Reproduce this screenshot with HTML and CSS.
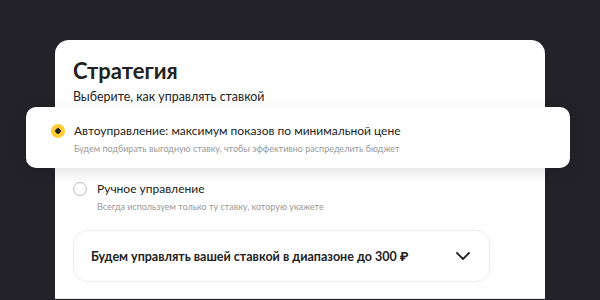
FILE: index.html
```html
<!DOCTYPE html>
<html lang="ru">
<head>
<meta charset="UTF-8">
<meta name="viewport" content="width=device-width, initial-scale=1.0">
<title>Стратегия</title>
<link rel="stylesheet" href="styles.css">
</head>
<body>

  <div class="card">
    <h1 class="card-title">Стратегия</h1>
    <p class="card-subtitle">Выберите, как управлять ставкой</p>

    <div class="option option-active">
      <span class="radio radio-checked"></span>
      <div class="option-text">
        <div class="option-label">Автоуправление: максимум показов по минимальной цене</div>
        <div class="option-hint">Будем подбирать выгодную ставку, чтобы эффективно распределить бюджет</div>
      </div>
    </div>

    <div class="option">
      <span class="radio"></span>
      <div class="option-text">
        <div class="option-label">Ручное управление</div>
        <div class="option-hint">Всегда используем только ту ставку, которую укажете</div>
      </div>
    </div>

    <div class="range">
      <span class="range-text">Будем управлять вашей ставкой в диапазоне до 300 ₽</span>
      <svg class="chevron" width="16" height="16" viewBox="0 0 16 16">
        <path d="M2 5l6 6 6-6" fill="none" stroke="#222" stroke-width="1.8" stroke-linecap="round" stroke-linejoin="round"/>
      </svg>
    </div>
  </div>

</body>
</html>
```

FILE: styles.css
```css
body {
  margin: 0;
  padding: 40px 0 0;
  background-color: #232228;
  font-family: 'Lato', 'Roboto', sans-serif;
  color: #222;
  height: 300px;
  box-sizing: border-box;
  overflow: hidden;
}

.card {
  width: 490px;
  margin-left: 55px;
  background-color: #fff;
  border-radius: 14px 14px 0 0;
  padding: 18px 0 0 18px;
  box-sizing: border-box;
  height: 259px;
  border-bottom: 1px solid #e4e4e4;
}

.card-title {
  margin: 0;
  font-size: 22px;
  font-weight: 700;
  line-height: 26px;
}

.card-subtitle {
  margin: 4px 0 0;
  font-size: 12.4px;
  line-height: 18px;
}

.option {
  display: flex;
  align-items: flex-start;
  gap: 10px;
  margin-top: 12px;
}

.option-active {
  margin: 1px -25px 0 -47px;
  padding: 15px 20px 12px 25px;
  gap: 9px;
  background-color: #fff;
  border-radius: 10px;
  box-shadow: 0 4px 14px rgba(0, 0, 0, 0.12);
  position: relative;
  height: 61px;
  box-sizing: border-box;
}

.radio {
  width: 14px;
  height: 14px;
  border-radius: 50%;
  border: 1.5px solid #bdbdbd;
  box-sizing: border-box;
  flex: none;
  margin-top: 2px;
}

.radio-checked {
  border: none;
  background: radial-gradient(circle, #222 2.5px, #fc3 3px);
}

.option-label {
  font-size: 12px;
  line-height: 18px;
}

.option-hint {
  margin-top: 2px;
  font-size: 9px;
  line-height: 13px;
  color: #999;
}

.range {
  display: flex;
  justify-content: space-between;
  align-items: center;
  width: 417px;
  height: 52px;
  margin-top: 17px;
  padding: 0 18px 0 17px;
  box-sizing: border-box;
  border: 1px solid #ececec;
  border-radius: 14px;
}

.range-text {
  font-size: 12.5px;
  font-weight: 700;
}

.chevron {
  display: block;
}
```
